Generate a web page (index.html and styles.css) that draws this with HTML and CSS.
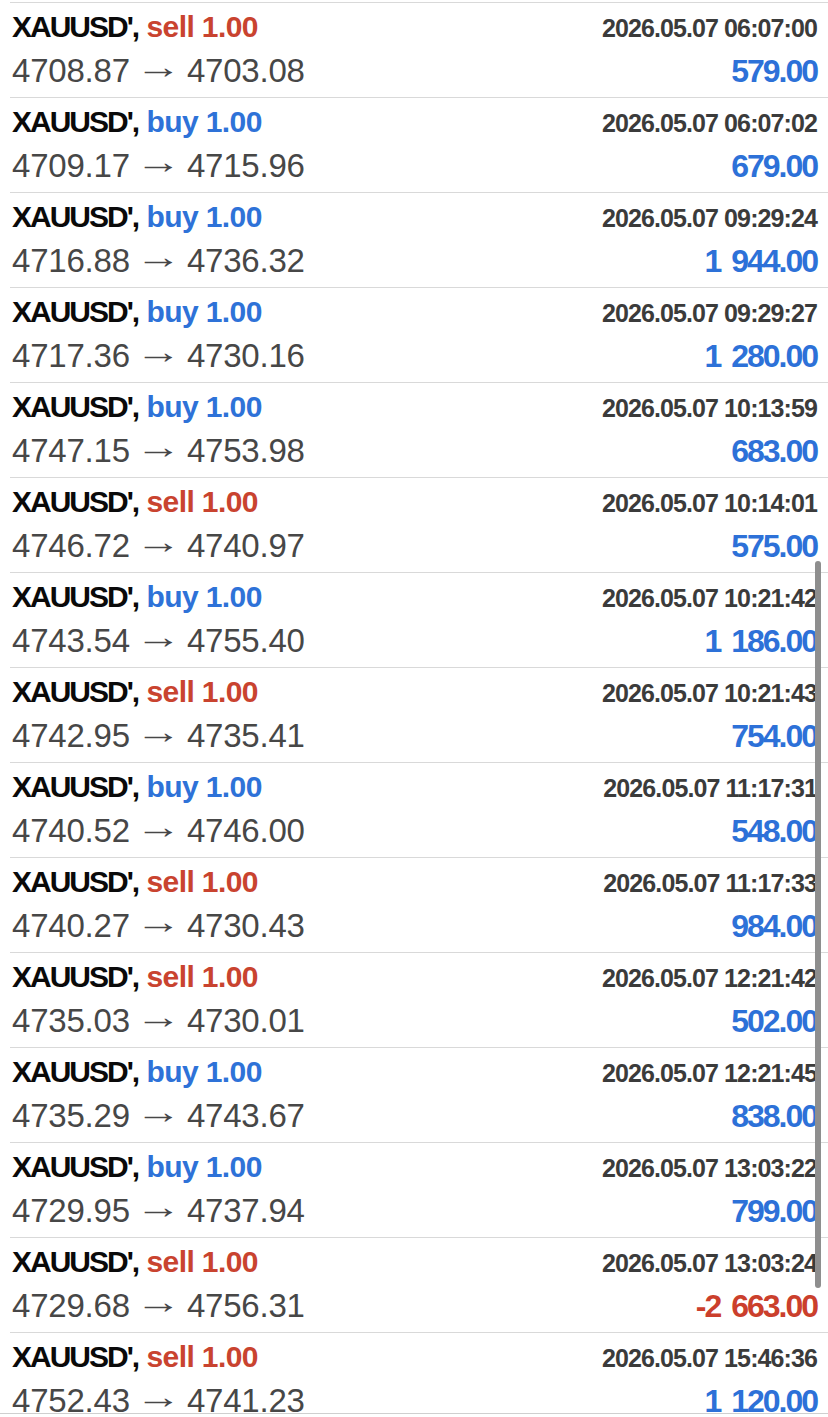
FILE: index.html
```html
<!DOCTYPE html>
<html lang="en">
    <head>
        <meta charset="UTF-8">
        <meta name="viewport" content="width=device-width, initial-scale=1.0">
        <title>History</title>
        <link rel="stylesheet" href="styles.css">
    </head>
    <body>
        <div id="deals" class="deals"></div>

        <div class="scrollbar"></div>
        <div class="bottom-edge"></div>

        <script>
        // Closed deals: type, time, open price, close price, profit
        const deals = [
            ['sell', '06:07:00', '4708.87', '4703.08', '579.00'],
            ['buy', '06:07:02', '4709.17', '4715.96', '679.00'],
            ['buy', '09:29:24', '4716.88', '4736.32', '1 944.00'],
            ['buy', '09:29:27', '4717.36', '4730.16', '1 280.00'],
            ['buy', '10:13:59', '4747.15', '4753.98', '683.00'],
            ['sell', '10:14:01', '4746.72', '4740.97', '575.00'],
            ['buy', '10:21:42', '4743.54', '4755.40', '1 186.00'],
            ['sell', '10:21:43', '4742.95', '4735.41', '754.00'],
            ['buy', '11:17:31', '4740.52', '4746.00', '548.00'],
            ['sell', '11:17:33', '4740.27', '4730.43', '984.00'],
            ['sell', '12:21:42', '4735.03', '4730.01', '502.00'],
            ['buy', '12:21:45', '4735.29', '4743.67', '838.00'],
            ['buy', '13:03:22', '4729.95', '4737.94', '799.00'],
            ['sell', '13:03:24', '4729.68', '4756.31', '-2 663.00'],
            ['sell', '15:46:36', '4752.43', '4741.23', '1 120.00']
        ];

        const list = document.getElementById('deals');

        deals.forEach(([type, time, open, close, profit]) => {
            const row = document.createElement('div');
            row.className = 'deal';

            const loss = profit.startsWith('-') ? ' loss' : '';

            row.innerHTML = `
                <div class="deal-line deal-head">
                    <span class="title"><span class="symbol">XAUUSD',</span> <span class="type ${type}">${type} 1.00</span></span>
                    <span class="time">2026.05.07 ${time}</span>
                </div>
                <div class="deal-line deal-foot">
                    <span class="prices">${open}<span class="arrow">&rarr;</span>${close}</span>
                    <span class="profit${loss}">${profit}</span>
                </div>`;

            list.appendChild(row);
        });
        </script>
    </body>
</html>
```

FILE: styles.css
```css
body {
    margin: 0;
    background: #fff;
    font-family: "Liberation Sans", Arial, sans-serif;
    overflow: hidden;
}
.deals {
    padding: 2px 0 0 10px;
}
.deal {
    box-sizing: border-box;
    height: 95px;
    border-top: 1px solid #d9d9d9;
    padding: 0 11px 0 2px;
}
.deal-line {
    display: flex;
    justify-content: space-between;
    align-items: baseline;
    white-space: nowrap;
}
.deal-head {
    height: 42px;
    padding-top: 2px;
    line-height: 44px;
}
.deal-foot {
    height: 49px;
    line-height: 47px;
}
.title {
    font-size: 30px;
    font-weight: bold;
}
.symbol {
    letter-spacing: -2px;
    color: #0a0a0a;
}
.type {
    letter-spacing: -0.6px;
}
.sell {
    color: #c9432f;
}
.buy {
    color: #2e72d8;
}
.time {
    font-size: 25px;
    font-weight: bold;
    letter-spacing: -0.9px;
    color: #3b3b3b;
}
.prices {
    font-size: 33px;
    letter-spacing: -0.2px;
    color: #474747;
}
.arrow {
    display: inline-block;
    width: 30px;
    margin: 0 22px 0 5px;
    line-height: 33px;
    letter-spacing: 0;
    vertical-align: 4px;
    transform: scaleX(1.4);
    transform-origin: left center;
}
.profit {
    font-size: 32px;
    font-weight: bold;
    letter-spacing: -2px;
    word-spacing: 4px;
    color: #2d71d8;
}
.profit.loss {
    color: #cb3f2c;
}
.scrollbar {
    position: absolute;
    top: 561px;
    right: 7px;
    width: 6px;
    height: 727px;
    border-radius: 3px;
    background: #8e8e8e;
}
.bottom-edge {
    position: fixed;
    left: 0;
    right: 0;
    bottom: 0;
    height: 3px;
    border-top: 1px solid #cfcfcf;
    background: #fff;
}
```
